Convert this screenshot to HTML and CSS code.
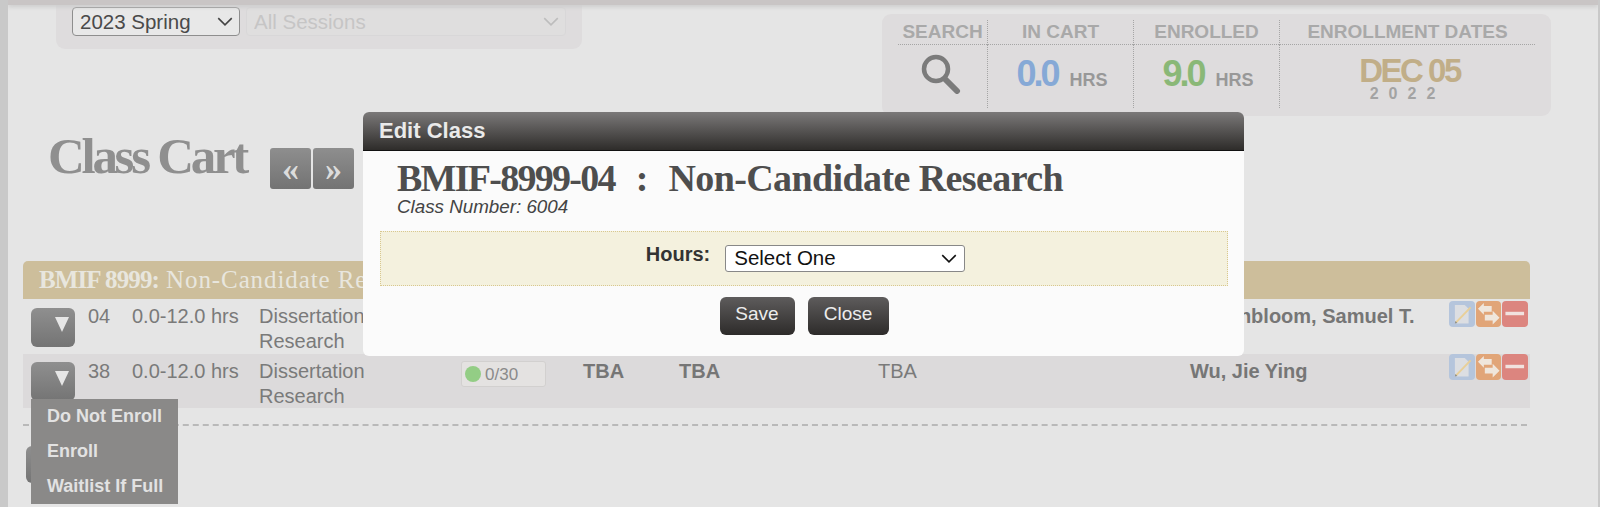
FILE: index.html
```html
<!DOCTYPE html>
<html lang="en">
<head>
    <meta charset="UTF-8">
    <title>Class Cart</title>
    <meta name="viewport" content="width=device-width, initial-scale=1.0">
    <link rel="stylesheet" href="styles.css">
</head>
<body>
    <svg class="defs" width="0" height="0">
        <symbol id="chevron" viewBox="0 0 14 8">
            <path d="M1 1l6 6 6-6" fill="none" stroke="currentColor" stroke-width="1.4"/>
        </symbol>
        <symbol id="ico-edit" viewBox="0 0 26 26">
            <path d="M6 4h10l4 4v15H6z" fill="#dcdee2"/>
            <path d="M7.5 21.5L22 6.5" stroke="#e8cf98" stroke-width="2"/>
            <path d="M6.5 20.5l-.5 2.5 2.500-.5z" fill="#8a8a80"/>
        </symbol>
        <symbol id="ico-swap" viewBox="0 0 26 26">
            <path d="M2 8l6-6v3h8v6H8v3z" fill="#efe6dc"/>
            <path d="M24 17l-7-7v4H9v6h8v4z" fill="#efe6dc"/>
        </symbol>
        <symbol id="ico-remove" viewBox="0 0 26 26">
            <rect x="3.5" y="11" width="19" height="3.5" fill="#f1e2df"/>
        </symbol>
    </svg>

    <div class="page">
        <div class="topbar"></div>

        <div class="header">
            <div class="term-panel">
                <div class="select-wrap term">
                    <select><option>2023 Spring</option></select>
                    <svg class="arrow"><use href="#chevron"/></svg>
                </div>
                <div class="select-wrap session">
                    <select disabled><option>All Sessions</option></select>
                    <svg class="arrow"><use href="#chevron"/></svg>
                </div>
            </div>

            <div class="stats">
                <div class="stat-head">SEARCH</div>
                <div class="stat-head">IN CART</div>
                <div class="stat-head">ENROLLED</div>
                <div class="stat-head">ENROLLMENT DATES</div>
                <div class="stat-cell">
                    <svg class="search-icon" width="42" height="40" viewBox="0 0 42 40">
                        <circle cx="17" cy="15" r="12" fill="none" stroke="#7b7b7b" stroke-width="4.5"/>
                        <path d="M26 25l12 12" stroke="#7b7b7b" stroke-width="6" stroke-linecap="round"/>
                    </svg>
                </div>
                <div class="stat-cell"><span class="hours blue">0.0</span><span class="unit">HRS</span></div>
                <div class="stat-cell"><span class="hours green">9.0</span><span class="unit">HRS</span></div>
                <div class="stat-cell dates">
                    <span class="date">DEC 05</span>
                    <span class="year">2022</span>
                </div>
            </div>
        </div>

        <div class="title-row">
            <h1>Class Cart</h1>
            <div class="pager">
                <button>«</button>
                <button>»</button>
            </div>
        </div>

        <div class="course-band"><b>BMIF 8999:</b> Non-Candidate Research</div>

        <div class="row">
            <div><button class="toggle"></button></div>
            <div>04</div>
            <div>0.0-12.0 hrs</div>
            <div class="desc">Dissertation Research</div>
            <div><span class="seats"><i></i>0/30</span></div>
            <div class="strong">TBA</div>
            <div class="strong">TBA</div>
            <div>TBA</div>
            <div class="strong">Rosenbloom, Samuel T.</div>
            <div class="actions">
                <span class="act edit"><svg><use href="#ico-edit"/></svg></span>
                <span class="act swap"><svg><use href="#ico-swap"/></svg></span>
                <span class="act remove"><svg><use href="#ico-remove"/></svg></span>
            </div>
        </div>

        <div class="row alt">
            <div class="menu-cell">
                <button class="toggle"></button>
                <ul class="enroll-menu">
                    <li>Do Not Enroll</li>
                    <li>Enroll</li>
                    <li>Waitlist If Full</li>
                </ul>
            </div>
            <div>38</div>
            <div>0.0-12.0 hrs</div>
            <div class="desc">Dissertation Research</div>
            <div><span class="seats"><i></i>0/30</span></div>
            <div class="strong">TBA</div>
            <div class="strong">TBA</div>
            <div>TBA</div>
            <div class="strong">Wu, Jie Ying</div>
            <div class="actions">
                <span class="act edit"><svg><use href="#ico-edit"/></svg></span>
                <span class="act swap"><svg><use href="#ico-swap"/></svg></span>
                <span class="act remove"><svg><use href="#ico-remove"/></svg></span>
            </div>
        </div>

        <div class="dash"></div>
        <div class="cart-action"></div>
    </div>

    <div class="dialog">
        <div class="dialog-head">Edit Class</div>
        <div class="dialog-body">
            <h2><span class="code">BMIF-8999-04</span><span class="colon">:</span><span class="name">Non-Candidate Research</span></h2>
            <div class="class-number">Class Number: 6004</div>
            <div class="hours-box">
                <label for="hours">Hours:</label>
                <div class="select-wrap hours-select">
                    <select id="hours"><option>Select One</option></select>
                    <svg class="arrow"><use href="#chevron"/></svg>
                </div>
            </div>
            <div class="dialog-buttons">
                <button class="save">Save</button>
                <button class="close">Close</button>
            </div>
        </div>
    </div>
</body>
</html>
```

FILE: styles.css
```css
html, body { margin: 0; height: 507px; overflow: hidden; }
body { font-family: "Liberation Sans", Arial, sans-serif; background: #e5e5e5; color: #7a7a7a; }
.defs { display: block; height: 0; }
button { font-family: inherit; border: none; padding: 0; }

.page { box-sizing: border-box; height: 507px; border-left: 8px solid #c9c9c9; border-right: 2px solid #c9c9c9; overflow: hidden; }
.topbar { height: 5px; background: #c9c5c5; box-shadow: 0 2px 4px #ccc; position: relative; z-index: 1; }

.header { display: flex; justify-content: space-between; align-items: flex-start; padding: 0 47px 0 48px; height: 112px; }
.term-panel { box-sizing: border-box; width: 526px; height: 44px; padding: 2px 16px 0; display: flex; gap: 6px; background: #dedcdd; border-radius: 0 0 9px 9px; }

.select-wrap { position: relative; height: 29px; color: #444; }
.select-wrap select { appearance: none; box-sizing: border-box; width: 100%; height: 100%; padding: 0 0 0 7px; font: 20.5px "Liberation Sans", Arial, sans-serif; color: #4a4a4a; background: #e8e8e8; border: 1px solid #8e8e8e; border-radius: 4px; }
.select-wrap .arrow { position: absolute; right: 7px; top: 10px; width: 16px; height: 9px; pointer-events: none; }
.term { width: 168px; }
.session { width: 320px; color: #bdbdbd; }
.session select { color: #bcbcbc; background: #e0dfdf; border-color: #d6d6d6; }

.stats { box-sizing: border-box; width: 669px; height: 102px; margin-top: 9px; padding: 6px 16px 0; display: grid; grid-template-columns: 89px 146px 146px 256px; grid-template-rows: 25px 63px; background: #dedcdd; border-radius: 9px; }
.stat-head { font-size: 19px; font-weight: bold; color: #a9a9a9; text-align: center; line-height: 24px; border-bottom: 1px dotted #a5a5a5; }
.stat-head + .stat-head, .stat-cell + .stat-cell { border-left: 1px dotted #a5a5a5; }
.stat-cell { display: flex; justify-content: center; align-items: baseline; padding-top: 13px; font-weight: bold; color: #989898; }
.search-icon { display: block; margin: -4px 6px 0 0; }
.hours { font-size: 36px; line-height: 32px; letter-spacing: -3px; margin: 0 12px 0 3px; }
.blue { color: #86a9d6; }
.green { color: #8ab877; }
.unit { font-size: 18px; }
.dates { flex-direction: column; align-items: center; padding-top: 3px; }
.date { font-size: 33px; line-height: 30px; letter-spacing: -2.5px; margin-left: 4px; color: #c1ae88; }
.year { font-size: 16px; line-height: 14px; letter-spacing: 10px; margin-top: 1px; color: #a3a3a3; }

.title-row { display: flex; align-items: flex-start; height: 144px; padding-left: 40px; }
h1 { margin: 14px 0 0; font: bold 51px/50px "Liberation Serif", serif; letter-spacing: -3.3px; color: #8f8f8f; }
.pager { display: flex; gap: 2px; margin: 31px 0 0 24px; }
.pager button { width: 41px; height: 41px; font: bold 34px/34px "Liberation Serif", serif; color: #dcdcdc; background: linear-gradient(#8e8e8e, #737373); border-radius: 3px; }

.course-band { box-sizing: border-box; margin-left: 15px; width: 1507px; height: 38px; padding-left: 16px; font: 25px/38px "Liberation Serif", serif; letter-spacing: .9px; color: #e8e6de; background: #cdbe9b; border-radius: 5px 5px 0 0; white-space: nowrap; }
.course-band b { letter-spacing: -.9px; }

.row { margin-left: 15px; width: 1507px; height: 55px; box-sizing: border-box; display: grid; grid-template-columns: 65px 44px 127px 202px 122px 96px 199px 312px 259px 81px; font-size: 20px; line-height: 25px; padding-top: 5px; }
.row.alt { height: 54px; background: #dcdadb; }
.row .desc { width: 120px; }
.strong { font-weight: bold; color: #767676; }
.menu-cell { position: relative; }

.toggle { display: block; position: relative; width: 44px; height: 39px; margin: 4px 0 0 8px; background: linear-gradient(#8f8f8f, #747474); border-radius: 6px; }
.alt .toggle { margin-top: 3px; }
.toggle::after { content: ""; position: absolute; left: 24px; top: 9px; border-style: solid; border-width: 15px 7px 0; border-color: #e6e6e6 transparent transparent; }

.seats { box-sizing: border-box; display: flex; align-items: center; gap: 4px; width: 85px; height: 26px; margin-top: 2px; padding-left: 3px; font-size: 17px; color: #8b8b8b; background: #e4e2e1; border: 1px solid #d2d0cf; border-radius: 3px; }
.seats i { width: 16px; height: 16px; border-radius: 50%; background: #93cd85; }

.actions { display: flex; gap: 1px; margin-top: -3px; align-items: flex-start; }
.alt .actions { margin-top: -5px; }
.act { display: block; width: 25.5px; height: 25.5px; border-radius: 4px; }
.act svg { display: block; width: 100%; height: 100%; }
.edit { background: #b5c5dc; }
.swap { background: #e1a578; }
.remove { background: #dc857f; }

.enroll-menu { position: absolute; left: 8px; top: 40px; width: 147px; height: 105px; margin: 0; padding: 0 0 0 16px; box-sizing: border-box; list-style: none; background: #8a8988; color: #e2e2e2; font-size: 18px; font-weight: bold; line-height: 35px; z-index: 2; }

.dash { margin: 16px 0 0 15px; width: 1504px; border-top: 2px dashed #b9b9b9; }
.cart-action { margin: 20px 0 0 18px; width: 100px; height: 37px; background: linear-gradient(#8f8f8f, #747474); border-radius: 6px; }

.dialog { position: absolute; left: 363px; top: 112px; width: 881px; height: 244px; background: #fbfbfb; border-radius: 6px; z-index: 5; }
.dialog-head { box-sizing: border-box; height: 39px; padding-left: 16px; font-size: 22px; font-weight: bold; line-height: 37px; color: #eaeaea; background: linear-gradient(#7b7979, #2e2c2a); border-bottom: 1px solid #111; border-radius: 6px 6px 0 0; }
.dialog-body { padding: 0 16px 0 17px; }
h2 { display: flex; margin: 0; padding: 7px 0 0 17px; font: bold 38px/40px "Liberation Serif", serif; color: #4e4e4e; white-space: nowrap; }
.code { letter-spacing: -1.73px; }
.colon { margin: 0 20px 0 21px; }
.name { letter-spacing: -.6px; }
.class-number { margin: -1px 0 0 17px; font-size: 18.8px; line-height: 19px; font-style: italic; color: #444; }
.hours-box { box-sizing: border-box; display: flex; justify-content: center; margin-top: 15px; height: 55px; padding: 13px 0 0 0; gap: 16px; background: #f4f1de; border: 1px dotted #d8c88f; }
.hours-box label { font-size: 20px; font-weight: bold; line-height: 18px; color: #333; }
.hours-select { width: 240px; height: 27px; margin: 0 -3px 0 -1px; color: #111; }
.hours-select select { padding: 0 0 3px 8px; font-size: 20.5px; color: #111; background: #fff; border-color: #888; border-radius: 3px; }
.hours-select .arrow { top: 9px; right: 8px; }
.dialog-buttons { display: flex; justify-content: center; gap: 13px; margin-top: 11px; }
.dialog-buttons button { height: 38px; font-size: 19px; color: #ececec; background: linear-gradient(#5e5c5c, #2d2b2a); border-radius: 6px; padding-bottom: 4px; }
.save { width: 75px; }
.close { width: 81px; }
```
